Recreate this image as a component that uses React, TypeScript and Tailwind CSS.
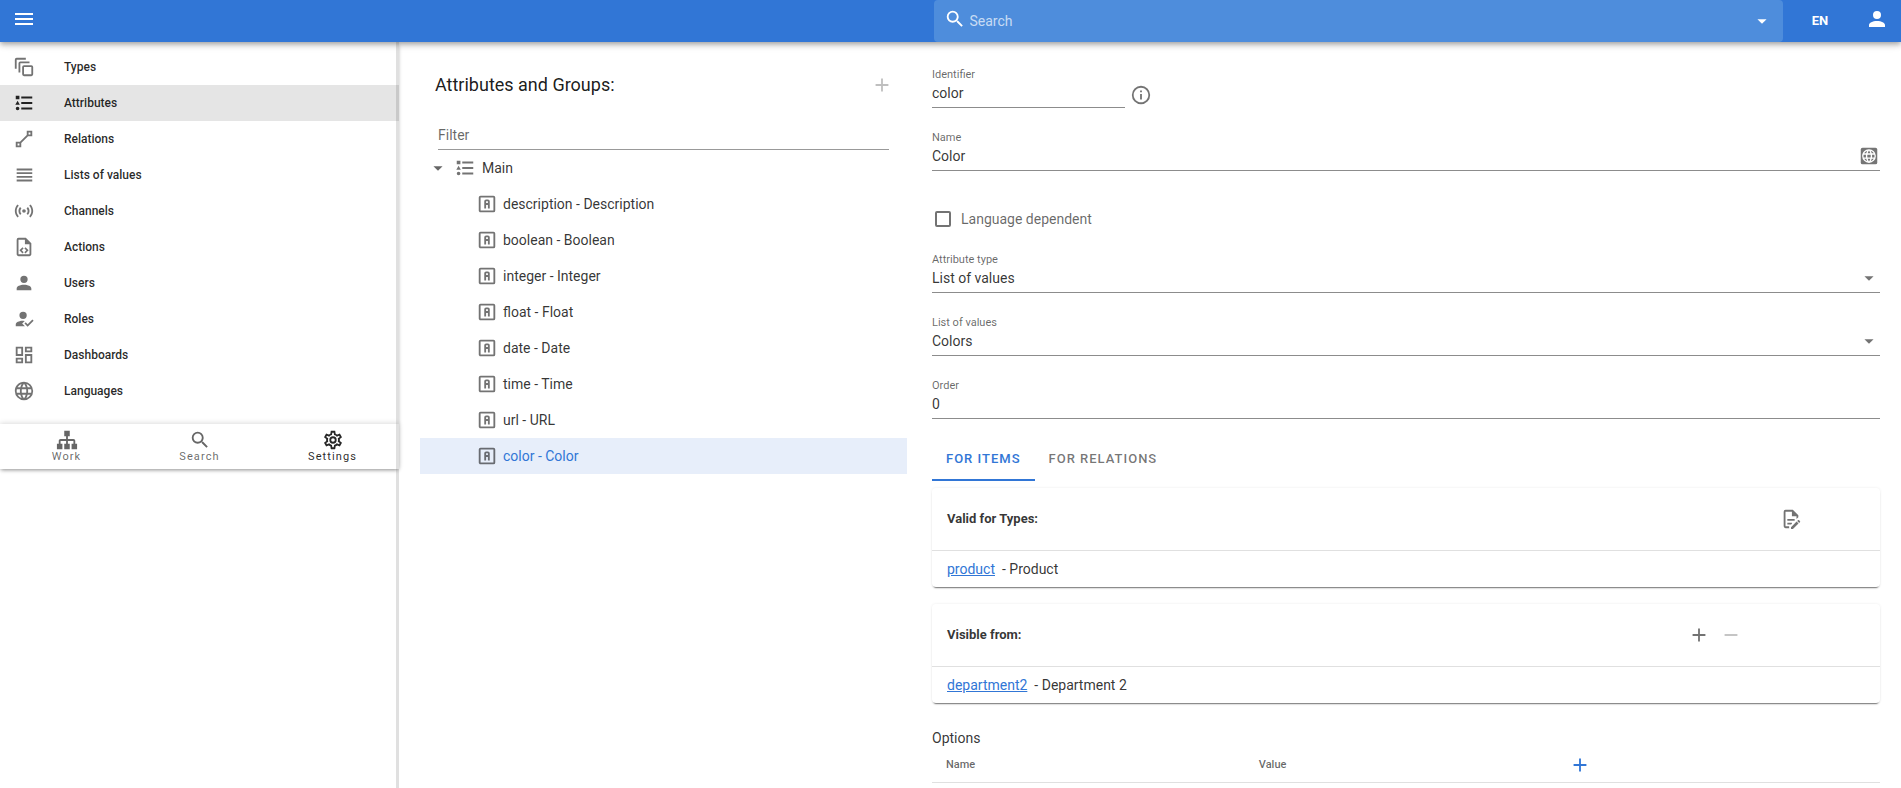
import { useState } from "react";
import type { ReactNode } from "react";

const paths = {
  menu: "M3,6H21V8H3V6M3,11H21V13H3V11M3,16H21V18H3V16Z",
  magnify:
    "M9.5,3A6.5,6.5 0 0,1 16,9.5C16,11.11 15.41,12.59 14.44,13.73L14.71,14H15.5L20.5,19L19,20.5L14,15.5V14.71L13.73,14.44C12.59,15.41 11.11,16 9.5,16A6.5,6.5 0 0,1 3,9.5A6.5,6.5 0 0,1 9.5,3M9.5,5C7,5 5,7 5,9.5C5,12 7,14 9.5,14C12,14 14,12 14,9.5C14,7 12,5 9.5,5Z",
  menuDown: "M7,10L12,15L17,10H7Z",
  account:
    "M12,4A4,4 0 0,1 16,8A4,4 0 0,1 12,12A4,4 0 0,1 8,8A4,4 0 0,1 12,4M12,14C16.42,14 20,15.79 20,18V20H4V18C4,15.79 7.58,14 12,14Z",
  plus: "M19,13H13V19H11V13H5V11H11V5H13V11H19V13Z",
  minus: "M19,13H5V11H19V13Z",
  types:
    "M4,2A2,2 0 0,0 2,4V14H4V4H14V2H4M8,6A2,2 0 0,0 6,8V18H8V8H18V6H8M20,12V20H12V12H20M20,10H12A2,2 0 0,0 10,12V20A2,2 0 0,0 12,22H20A2,2 0 0,0 22,20V12A2,2 0 0,0 20,10Z",
  attributes:
    "M5,9.5L7.5,14H2.5L5,9.5M3,4H7V8H3V4M5,20A2,2 0 0,0 7,18A2,2 0 0,0 5,16A2,2 0 0,0 3,18A2,2 0 0,0 5,20M9,5V7H21V5H9M9,19H21V17H9V19M9,13H21V11H9V13Z",
  relations:
    "M15,3V7.59L7.59,15H3V21H9V16.42L16.42,9H21V3M17,5H19V7H17M5,17H7V19H5",
  lists: "M4,5V7H21V5M4,11H21V9H4M4,19H21V17H4M4,15H21V13H4V15Z",
  channels:
    "M4.93,4.93C3.12,6.74 2,9.24 2,12C2,14.76 3.12,17.26 4.93,19.07L6.34,17.66C4.89,16.22 4,14.22 4,12C4,9.79 4.89,7.78 6.34,6.34L4.93,4.93M19.07,4.93L17.66,6.34C19.11,7.78 20,9.79 20,12C20,14.22 19.11,16.22 17.66,17.66L19.07,19.07C20.88,17.26 22,14.76 22,12C22,9.24 20.88,6.74 19.07,4.93M7.76,7.76C6.67,8.85 6,10.35 6,12C6,13.65 6.67,15.15 7.76,16.24L9.17,14.83C8.45,14.11 8,13.11 8,12C8,10.89 8.45,9.89 9.17,9.17L7.76,7.76M16.24,7.76L14.83,9.17C15.55,9.89 16,10.89 16,12C16,13.11 15.55,14.11 14.83,14.83L16.24,16.24C17.33,15.15 18,13.65 18,12C18,10.35 17.33,8.85 16.24,7.76M12,10A2,2 0 0,0 10,12A2,2 0 0,0 12,14A2,2 0 0,0 14,12A2,2 0 0,0 12,10Z",
  actions:
    "M14,2H6A2,2 0 0,0 4,4V20A2,2 0 0,0 6,22H18A2,2 0 0,0 20,20V8L14,2M18,20H6V4H13V9H18V20M9.54,15.65L11.63,17.74L10.35,19L7,15.65L10.35,12.3L11.63,13.56L9.54,15.65M17,15.65L13.65,19L12.38,17.74L14.47,15.65L12.38,13.56L13.65,12.3L17,15.65Z",
  roles:
    "M21.1,12.5L22.5,13.91L15.97,20.5L12.5,17L13.9,15.59L15.97,17.67L21.1,12.5M10,17L13,20H3V18C3,15.79 6.58,14 11,14L12.89,14.11L10,17M11,4A4,4 0 0,1 15,8A4,4 0 0,1 11,12A4,4 0 0,1 7,8A4,4 0 0,1 11,4Z",
  dashboards:
    "M19,5V7H15V5H19M9,5V11H5V5H9M19,13V19H15V13H19M9,17V19H5V17H9M21,3H13V9H21V3M11,3H3V13H11V3M21,11H13V21H21V11M11,15H3V21H11V15Z",
  web: "M16.36,14C16.44,13.34 16.5,12.68 16.5,12C16.5,11.32 16.44,10.66 16.36,10H19.74C19.9,10.64 20,11.31 20,12C20,12.69 19.9,13.36 19.74,14M14.59,19.56C15.19,18.45 15.65,17.25 15.97,16H18.92C17.96,17.65 16.43,18.93 14.59,19.56M14.34,14H9.66C9.56,13.34 9.5,12.68 9.5,12C9.5,11.32 9.56,10.65 9.66,10H14.34C14.43,10.65 14.5,11.32 14.5,12C14.5,12.68 14.43,13.34 14.34,14M12,19.96C11.17,18.76 10.5,17.43 10.09,16H13.91C13.5,17.43 12.83,18.76 12,19.96M8,8H5.08C6.03,6.34 7.57,5.06 9.4,4.44C8.8,5.55 8.35,6.75 8,8M5.08,16H8C8.35,17.25 8.8,18.45 9.4,19.56C7.57,18.93 6.03,17.65 5.08,16M4.26,14C4.1,13.36 4,12.69 4,12C4,11.31 4.1,10.64 4.26,10H7.64C7.56,10.66 7.5,11.32 7.5,12C7.5,12.68 7.56,13.34 7.64,14M12,4.03C12.83,5.23 13.5,6.57 13.91,8H10.09C10.5,6.57 11.17,5.23 12,4.03M18.92,8H15.97C15.65,6.75 15.19,5.55 14.59,4.44C16.43,5.07 17.96,6.34 18.92,8M12,2C6.47,2 2,6.5 2,12A10,10 0 0,0 12,22A10,10 0 0,0 22,12A10,10 0 0,0 12,2Z",
  sitemap:
    "M9,2V8H11V11H5C3.89,11 3,11.89 3,13V16H1V22H7V16H5V13H11V16H9V22H15V16H13V13H19V16H17V22H23V16H21V13C21,11.89 20.11,11 19,11H13V8H15V2H9Z",
  cog: "M12,8A4,4 0 0,1 16,12A4,4 0 0,1 12,16A4,4 0 0,1 8,12A4,4 0 0,1 12,8M12,10A2,2 0 0,0 10,12A2,2 0 0,0 12,14A2,2 0 0,0 14,12A2,2 0 0,0 12,10M10,22C9.75,22 9.54,21.82 9.5,21.58L9.13,18.93C8.5,18.68 7.96,18.34 7.44,17.94L4.95,18.95C4.73,19.03 4.46,18.95 4.34,18.73L2.34,15.27C2.21,15.05 2.27,14.78 2.46,14.63L4.57,12.97L4.5,12L4.57,11L2.46,9.37C2.27,9.22 2.21,8.95 2.34,8.73L4.34,5.27C4.46,5.05 4.73,4.96 4.95,5.05L7.44,6.05C7.96,5.66 8.5,5.32 9.13,5.07L9.5,2.42C9.54,2.18 9.75,2 10,2H14C14.25,2 14.46,2.18 14.5,2.42L14.87,5.07C15.5,5.32 16.04,5.66 16.56,6.05L19.05,5.05C19.27,4.96 19.54,5.05 19.66,5.27L21.66,8.73C21.79,8.95 21.73,9.22 21.54,9.37L19.43,11L19.5,12L19.43,13L21.54,14.63C21.73,14.78 21.79,15.05 21.66,15.27L19.66,18.73C19.54,18.95 19.27,19.04 19.05,18.95L16.56,17.95C16.04,18.34 15.5,18.68 14.87,18.93L14.5,21.58C14.46,21.82 14.25,22 14,22H10M11.25,4L10.88,6.61C9.68,6.86 8.62,7.5 7.85,8.39L5.44,7.35L4.69,8.65L6.8,10.2C6.4,11.37 6.4,12.64 6.8,13.8L4.68,15.36L5.43,16.66L7.86,15.62C8.63,16.5 9.68,17.14 10.87,17.38L11.24,20H12.76L13.13,17.39C14.32,17.14 15.37,16.5 16.14,15.62L18.57,16.66L19.32,15.36L17.2,13.81C17.6,12.64 17.6,11.37 17.2,10.2L19.31,8.65L18.56,7.35L16.15,8.39C15.38,7.5 14.32,6.86 13.12,6.62L12.75,4H11.25Z",
  letterBox:
    "M3,5A2,2 0 0,1 5,3H19A2,2 0 0,1 21,5V19A2,2 0 0,1 19,21H5C3.89,21 3,20.1 3,19V5M5,5V19H19V5H5M11,7H13A2,2 0 0,1 15,9V17H13V13H11V17H9V9A2,2 0 0,1 11,7M11,9V11H13V9H11Z",
  info: "M11,9H13V7H11M12,20C7.59,20 4,16.41 4,12C4,7.59 7.59,4 12,4C16.41,4 20,7.59 20,12C20,16.41 16.41,20 12,20M12,2A10,10 0 0,0 2,12A10,10 0 0,0 12,22A10,10 0 0,0 22,12A10,10 0 0,0 12,2M11,17H13V11H11V17Z",
  fileEdit:
    "M8,12H16V14H8V12M10,20H6V4H13V9H18V12.1L20,10.1V8L14,2H6A2,2 0 0,0 4,4V20A2,2 0 0,0 6,22H10V20M8,18H12.1L13,17.1V16H8V18M20.2,13C20.3,13 20.5,13.1 20.6,13.2L21.9,14.5C22.1,14.7 22.1,15.1 21.9,15.3L20.9,16.3L18.8,14.2L19.8,13.2C19.9,13.1 20,13 20.2,13M20.2,16.9L14.1,23H12V20.9L18.1,14.8L20.2,16.9Z",
};

type IconName = keyof typeof paths;

function Icon({ name, size = 22, className = "" }: { name: IconName; size?: number; className?: string }) {
  return (
    <svg viewBox="0 0 24 24" width={size} height={size} fill="currentColor" aria-hidden="true" className={`shrink-0 ${className}`}>
      <path d={paths[name]} />
    </svg>
  );
}

function WebBox() {
  return (
    <svg viewBox="0 0 24 24" width={22} height={22} aria-hidden="true">
      <rect x="3" y="3" width="18" height="18" rx="2" fill="#757575" />
      <g transform="translate(3 3) scale(0.75)">
        <path d={paths.web} fill="white" />
      </g>
    </svg>
  );
}

const navItems: { icon: IconName; label: string }[] = [
  { icon: "types", label: "Types" },
  { icon: "attributes", label: "Attributes" },
  { icon: "relations", label: "Relations" },
  { icon: "lists", label: "Lists of values" },
  { icon: "channels", label: "Channels" },
  { icon: "actions", label: "Actions" },
  { icon: "account", label: "Users" },
  { icon: "roles", label: "Roles" },
  { icon: "dashboards", label: "Dashboards" },
  { icon: "web", label: "Languages" },
];

const sections: { icon: IconName; label: string }[] = [
  { icon: "sitemap", label: "Work" },
  { icon: "magnify", label: "Search" },
  { icon: "cog", label: "Settings" },
];

const attributes = [
  "description - Description",
  "boolean - Boolean",
  "integer - Integer",
  "float - Float",
  "date - Date",
  "time - Time",
  "url - URL",
  "color - Color",
];

function Header() {
  return (
    <header className="relative z-20 flex h-[42px] items-stretch bg-[#3176d6] text-white shadow-[0_2px_4px_-1px_rgba(0,0,0,0.2),0_4px_5px_0_rgba(0,0,0,0.14),0_1px_10px_0_rgba(0,0,0,0.12)]">
      <button aria-label="Menu" className="mr-14 flex w-12 items-center justify-center pb-1">
        <Icon name="menu" size={24} />
      </button>
      <div className="flex-1" />
      <div className="flex flex-1 items-center rounded bg-[#4e8ddc] pr-[10px] pl-[10px]">
        <Icon name="magnify" className="mb-1" />
        <input
          type="text"
          aria-label="Search"
          placeholder="Search"
          className="ml-1 min-w-0 flex-1 bg-transparent text-sm outline-none placeholder:text-white/70"
        />
        <button aria-label="Search options">
          <Icon name="menuDown" />
        </button>
      </div>
      <div className="flex w-[118px] items-center">
        <button className="w-[74px] text-[13px] font-bold">EN</button>
        <button aria-label="Account" className="mb-1 ml-2">
          <Icon name="account" size={24} />
        </button>
      </div>
    </header>
  );
}

function Sidebar() {
  const [selected, setSelected] = useState("Attributes");
  return (
    <aside className="w-[399px] shrink-0 border-r-[3px] border-[#e0e0e0]">
      <div className="-mr-[3px] shadow-[0_2px_4px_-1px_rgba(0,0,0,0.4)]">
        <nav className="pt-[7px] pb-[15px]">
          {navItems.map((item) => (
            <button
              key={item.label}
              onClick={() => setSelected(item.label)}
              className={`flex h-9 w-full items-center pl-[13px] text-left text-xs font-medium text-black/85 ${
                item.label === selected ? "bg-black/10" : ""
              }`}
            >
              <Icon name={item.icon} className={item.label === selected ? "text-black/85" : "text-black/55"} />
              <span className="ml-[29px]">{item.label}</span>
            </button>
          ))}
        </nav>
        <div className="grid h-[45px] grid-cols-3 shadow-[0_-1px_5px_0_rgba(0,0,0,0.14)]">
          {sections.map((s) => (
            <button
              key={s.label}
              className={`flex flex-col items-center justify-center pb-[2px] text-[11px] leading-3 tracking-widest ${
                s.label === "Settings" ? "text-black/85" : "text-black/60"
              }`}
            >
              <Icon name={s.icon} />
              {s.label}
            </button>
          ))}
        </div>
      </div>
    </aside>
  );
}

function Tree() {
  const [selected, setSelected] = useState("color - Color");
  return (
    <section className="pt-[29px]">
      <div className="flex h-7 items-center justify-between pr-[14px] pl-[15px]">
        <h1 className="text-lg text-black/90">Attributes and Groups:</h1>
        <button aria-label="Add attribute" className="text-black/25">
          <Icon name="plus" />
        </button>
      </div>
      <div className="mt-[22px] mr-[18px] ml-[18px] border-b border-black/40">
        <input
          type="text"
          aria-label="Filter"
          placeholder="Filter"
          className="h-7 w-full bg-transparent text-sm outline-none placeholder:text-black/60"
        />
      </div>
      <div className="flex h-9 items-center pl-[7px] text-sm text-black/80">
        <button aria-label="Collapse Main" className="text-black/60">
          <Icon name="menuDown" />
        </button>
        <Icon name="attributes" className="ml-[5px] text-black/55" />
        <span className="ml-[6px]">Main</span>
      </div>
      <ul>
        {attributes.map((a) => (
          <li key={a}>
            <button
              onClick={() => setSelected(a)}
              className={`flex h-9 w-full items-center pl-14 text-left text-sm ${
                a === selected ? "bg-[#e7eefa] text-[#3176d6]" : "text-black/80"
              }`}
            >
              <Icon name="letterBox" className="text-black/55" />
              <span className="ml-[5px]">{a}</span>
            </button>
          </li>
        ))}
      </ul>
    </section>
  );
}

function Field({ id, label, children }: { id: string; label: string; children: ReactNode }) {
  return (
    <div className="flex h-[42px] flex-col justify-end border-b border-black/45">
      <label htmlFor={id} className="text-[11px] leading-[14px] text-black/60">
        {label}
      </label>
      <div className="relative flex h-[25px] items-start">{children}</div>
    </div>
  );
}

const control = "h-[22px] w-full min-w-0 appearance-none bg-transparent text-sm text-black/80 outline-none";

function SelectField({ id, label, value }: { id: string; label: string; value: string }) {
  return (
    <Field id={id} label={label}>
      <select id={id} defaultValue={value} className={control}>
        <option>{value}</option>
      </select>
      <Icon name="menuDown" className="pointer-events-none absolute top-0 right-0 text-black/55" />
    </Field>
  );
}

function Card({ title, code, name, actions }: { title: string; code: string; name: string; actions: ReactNode }) {
  return (
    <div className="rounded shadow-[0_3px_1px_-2px_rgba(0,0,0,0.3),0_2px_2px_-1px_rgba(0,0,0,0.3),0_0_3px_0_rgba(0,0,0,0.08)]">
      <div className="flex h-[63px] items-center justify-between border-b border-black/12 pl-[15px]">
        <h2 className="text-[13px] font-bold text-black/80">{title}</h2>
        {actions}
      </div>
      <div className="flex h-9 items-center gap-[7px] pl-[15px] text-sm text-black/80">
        <a href="#" className="text-[#3176d6] underline">
          {code}
        </a>
        <span>- {name}</span>
      </div>
    </div>
  );
}

function Form() {
  return (
    <section className="pt-6">
      <div className="flex items-center">
        <div className="w-[193px]">
          <Field id="identifier" label="Identifier">
            <input id="identifier" defaultValue="color" className={control} />
          </Field>
        </div>
        <button aria-label="Information" className="mt-[15px] ml-[5px] text-black/55">
          <Icon name="info" />
        </button>
      </div>
      <div className="mt-[21px]">
        <Field id="name" label="Name">
          <input id="name" defaultValue="Color" className={control} />
          <button aria-label="Translations">
            <WebBox />
          </button>
        </Field>
      </div>
      <label className="mt-9 flex h-6 items-center gap-[10px] pl-[3px] text-sm text-black/60">
        <input type="checkbox" className="size-4 appearance-none rounded-xs border-2 border-black/55 checked:bg-[#3176d6]" />
        Language dependent
      </label>
      <div className="mt-5 flex flex-col gap-[21px]">
        <SelectField id="attribute-type" label="Attribute type" value="List of values" />
        <SelectField id="value-list" label="List of values" value="Colors" />
        <Field id="order" label="Order">
          <input id="order" defaultValue="0" className={control} />
        </Field>
      </div>
      <div role="tablist" className="mt-5 flex h-[42px] text-[13px] font-medium tracking-[1px]">
        <button role="tab" aria-selected="true" className="border-b-2 border-[#3176d6] px-[14px] text-[#3176d6]">
          FOR ITEMS
        </button>
        <button role="tab" aria-selected="false" className="border-b-2 border-transparent px-[14px] text-black/55">
          FOR RELATIONS
        </button>
      </div>
      <div className="mt-[7px] flex flex-col gap-[17px]">
        <Card
          title="Valid for Types:"
          code="product"
          name="Product"
          actions={
            <button aria-label="Edit types" className="mr-[78px] text-black/55">
              <Icon name="fileEdit" />
            </button>
          }
        />
        <Card
          title="Visible from:"
          code="department2"
          name="Department 2"
          actions={
            <div className="mr-[138px] flex gap-[10px] text-black/55">
              <button aria-label="Add department">
                <Icon name="plus" />
              </button>
              <button aria-label="Remove department" className="text-black/25">
                <Icon name="minus" />
              </button>
            </div>
          }
        />
      </div>
      <h2 className="mt-[25px] text-sm text-black/80">Options</h2>
      <table className="w-full table-fixed border-b border-black/12 text-left text-[11px] text-black/60">
        <thead>
          <tr className="h-[34px]">
            <th className="w-[33%] pl-[14px] font-medium">Name</th>
            <th className="w-[33%] pl-[14px] font-medium">Value</th>
            <th className="pl-[11px]">
              <button aria-label="Add option" className="block text-[#3176d6]">
                <Icon name="plus" />
              </button>
            </th>
          </tr>
        </thead>
      </table>
    </section>
  );
}

export default function App() {
  return (
    <div className="flex h-screen flex-col overflow-hidden bg-white font-['Roboto',sans-serif]">
      <Header />
      <div className="flex min-h-0 flex-1">
        <Sidebar />
        <main className="grid min-w-0 flex-1 grid-cols-[487fr_948fr] gap-[25px] overflow-hidden px-[21px]">
          <Tree />
          <Form />
        </main>
      </div>
    </div>
  );
}
